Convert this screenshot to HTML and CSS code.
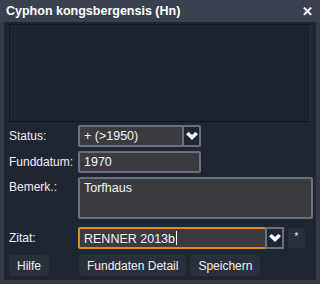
FILE: index.html
```html
<!DOCTYPE html>
<html>
<head>
<meta charset="utf-8">
<link rel="stylesheet" href="styles.css">
</head>
<body>
<div class="window">
  <div class="titlebar">
    <span class="title">Cyphon kongsbergensis (Hn)</span>
    <span class="close">&#x2715;</span>
  </div>
  <div class="body">
    <div class="panel"></div>
    <div class="form">
      <label class="lbl">Status:</label>
      <div class="combo short">
        <span class="val">+ (&gt;1950)</span>
        <span class="drop"><svg width="12" height="9" viewBox="0 0 12 9"><path d="M0.5 2.2 L2.6 0.3 L6 3.4 L9.4 0.3 L11.5 2.2 L6 7.6 Z" fill="#fff" stroke="#fff" stroke-width="0.8" stroke-linejoin="round"/></svg></span>
      </div>
      <label class="lbl">Funddatum:</label>
      <div class="input short"><span class="val">1970</span></div>
      <label class="lbl top">Bemerk.:</label>
      <div class="input area"><span class="val">Torfhaus</span></div>
      <label class="lbl z">Zitat:</label>
      <div class="zrow">
        <div class="combo focus">
          <span class="val">RENNER 2013b<span class="caret"></span></span>
          <span class="drop"><svg width="12" height="9" viewBox="0 0 12 9"><path d="M0.5 2.2 L2.6 0.3 L6 3.4 L9.4 0.3 L11.5 2.2 L6 7.6 Z" fill="#fff" stroke="#fff" stroke-width="0.8" stroke-linejoin="round"/></svg></span>
        </div>
        <button class="btn star">*</button>
      </div>
    </div>
    <div class="buttons">
      <button class="btn">Hilfe</button>
      <div class="right">
        <button class="btn">Funddaten Detail</button>
        <button class="btn">Speichern</button>
      </div>
    </div>
  </div>
</div>
</body>
</html>
```
FILE: styles.css
```css
* { box-sizing: border-box; }
html, body { margin: 0; padding: 0; background: #1e2631; }
body { font-family: "Liberation Sans", Arial, sans-serif; font-size: 12px; color: #eef0f3; }
.window { width: 320px; height: 284px; display: flex; flex-direction: column; background: #333a46; }
.titlebar { height: 22px; display: flex; align-items: center; justify-content: space-between; padding: 0 7px 0 6px; background: #3a414e; }
.title { font-weight: bold; font-size: 12.5px; color: #fff; }
.close { font-size: 13px; font-weight: bold; color: #fff; }
.body { flex: 1; margin: 0 4px 4px 4px; background: #1e2631; padding: 2px 5px 0 5px; display: flex; flex-direction: column; }
.panel { height: 98px; background: #1c2430; border: 1px solid #10161d; border-right-color: #2c3440; }
.form { display: grid; grid-template-columns: 69px 1fr; column-gap: 0; row-gap: 4px; margin-top: 3px; }
.lbl { display: flex; align-items: center; height: 22px; padding-left: 0; font-size: 12px; }
.lbl.top { align-items: flex-start; padding-top: 3px; }
.lbl.z { margin-top: 4px; }
.combo, .input { display: flex; height: 22px; background: #3a3b3f; border: 2px solid #6a7080; border-radius: 2px; }
.short { width: 123px; }
.area { height: 42px; align-items: flex-start; width: 235px; }
.val { flex: 1; padding: 2px 0 0 4px; font-size: 12.5px; color: #f4f5f6; line-height: 15px; }
.drop { width: 17px; background: #1e2631; display: flex; align-items: center; justify-content: center; border-left: 2px solid #6a7080; }
.zrow { display: flex; align-items: center; gap: 4px; margin-top: 4px; }
.combo.focus { width: 206px; border-color: #e58a1f; }
.combo.focus .drop { border: 2px solid #6a7080; margin: -2px -2px -2px 0; width: 19px; }
.caret { display: inline-block; width: 1px; height: 14px; background: #fff; vertical-align: -2px; margin-left: 1px; }
.btn { font-family: "Liberation Sans", Arial, sans-serif; font-size: 12px; color: #eef0f3; background: #28303b; border: none; border-radius: 3px; height: 21px; padding: 0 8px; }
.star { width: 17px; height: 20px; padding: 0 0 4px 0; font-size: 10px; }
.buttons { display: flex; margin-top: 6px; }
.buttons .right { display: flex; gap: 4px; margin-left: 30px; }
```
